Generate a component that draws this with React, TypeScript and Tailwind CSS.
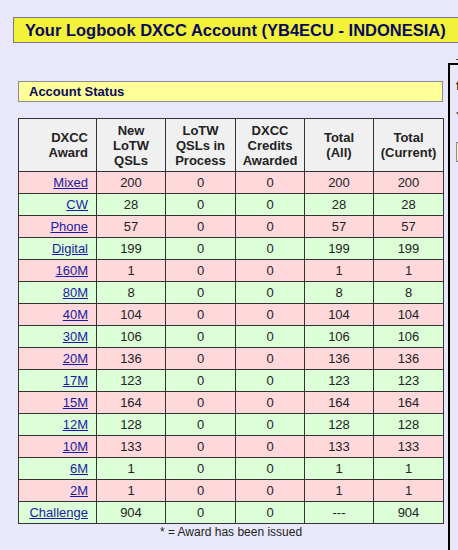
const rows: [string, string, string, string, string, string][] = [
  ["Mixed", "200", "0", "0", "200", "200"],
  ["CW", "28", "0", "0", "28", "28"],
  ["Phone", "57", "0", "0", "57", "57"],
  ["Digital", "199", "0", "0", "199", "199"],
  ["160M", "1", "0", "0", "1", "1"],
  ["80M", "8", "0", "0", "8", "8"],
  ["40M", "104", "0", "0", "104", "104"],
  ["30M", "106", "0", "0", "106", "106"],
  ["20M", "136", "0", "0", "136", "136"],
  ["17M", "123", "0", "0", "123", "123"],
  ["15M", "164", "0", "0", "164", "164"],
  ["12M", "128", "0", "0", "128", "128"],
  ["10M", "133", "0", "0", "133", "133"],
  ["6M", "1", "0", "0", "1", "1"],
  ["2M", "1", "0", "0", "1", "1"],
  ["Challenge", "904", "0", "0", "---", "904"],
];

const headers = [
  ["DXCC", "Award"],
  ["New", "LoTW", "QSLs"],
  ["LoTW", "QSLs in", "Process"],
  ["DXCC", "Credits", "Awarded"],
  ["Total", "(All)"],
  ["Total", "(Current)"],
];

const widths = ["w-[78px]", "w-[69px]", "w-[70px]", "w-[69px]", "w-[69px]", "w-[70px]"];

export default function App() {
  return (
    <div className="w-[458px] h-[550px] overflow-hidden bg-[#e8e8fa] font-['Liberation_Sans',Arial,sans-serif] text-[#222]">
      <div className="pt-[17px] pl-[13px]">
        <div className="w-[600px] h-[26px] bg-[#f2f23a] border border-[#7a7a8a] pl-[11px] flex items-center">
          <span className="text-[16.5px] font-bold text-[#0a0a5a]">Your Logbook DXCC Account (YB4ECU - INDONESIA)</span>
        </div>
      </div>

      <div className="flex mt-[20px]">
        <div className="pl-[18px] w-[448px] shrink-0 pt-[18px]">
          <div className="w-[425px] h-[21px] bg-[#ffff99] border border-[#8a8a9a] pl-[10px] flex items-center">
            <span className="text-[13px] font-bold text-[#0a0a5a]">Account Status</span>
          </div>

          <table className="mt-[16px] w-[426px] border-collapse border border-black text-[13px] table-fixed">
            <thead>
              <tr className="h-[53px] bg-[#f0f0f0]">
                {headers.map((h, i) => (
                  <th
                    key={i}
                    className={`${widths[i]} border border-[#333] font-bold leading-[15px] ${i === 0 ? "text-right pr-[8px]" : "text-center"}`}
                  >
                    {h.map((l, j) => (
                      <div key={j}>{l}</div>
                    ))}
                  </th>
                ))}
              </tr>
            </thead>
            <tbody>
              {rows.map((r, i) => (
                <tr key={r[0]} className={`h-[22px] ${i % 2 === 0 ? "bg-[#ffd8dc]" : "bg-[#dcffd8]"}`}>
                  <td className="border border-[#333] text-right pr-[8px] p-0">
                    <a href="#" className="text-[#1a1aa6] underline">{r[0]}</a>
                  </td>
                  {r.slice(1).map((v, j) => (
                    <td key={j} className="border border-[#333] text-center p-0">{v}</td>
                  ))}
                </tr>
              ))}
            </tbody>
          </table>
          <div className="w-[426px] text-center text-[12px] leading-[14px] mt-[1px]">* = Award has been issued</div>
        </div>

        <div className="shrink-0 w-[40px] h-[600px] border-l-2 border-t-2 border-black bg-[#e8e8fa] pl-[6px] text-[13px]">
          <div className="leading-[14px] -mt-[8px]">T</div>
          <div className="font-bold mt-[5px]">f</div>
          <div className="text-[11px] mt-[12px]">Y</div>
          <div className="mt-[18px] h-[20px] bg-[#ffff99] border border-[#8a8a9a]" />
        </div>
      </div>
    </div>
  );
}
